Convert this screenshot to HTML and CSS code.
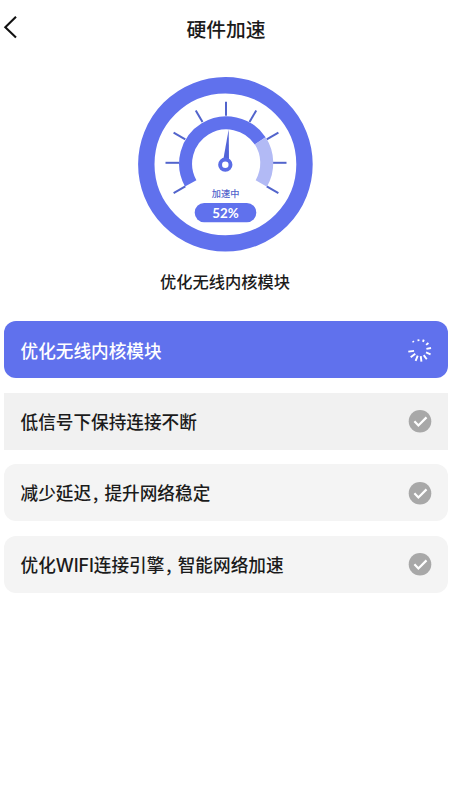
FILE: index.html
```html
<!DOCTYPE html>
<html lang="zh-CN">
<head>
<meta charset="utf-8">
<meta name="viewport" content="width=device-width, initial-scale=1">
<title>硬件加速</title>
<link rel="stylesheet" href="styles.css">
</head>
<body>
<svg class="defs" width="0" height="0" aria-hidden="true">
  <symbol id="check" viewBox="0 0 24 24">
    <circle cx="12" cy="12.3" r="11.3" fill="#a8a8a8"/>
    <path d="M6.4 12.3l4 4.2 8.1-8.1" fill="none" stroke="#fff" stroke-width="2.2"/>
  </symbol>
</svg>
<header class="header">
  <svg class="back" width="20" height="28" viewBox="0 0 20 28"><path d="M16 2.8L5.3 13.2l10.7 10.3" fill="none" stroke="#111" stroke-width="2.1"/></svg>
  <h1 class="title">硬件加速</h1>
</header>
<main>
  <section class="status">
    <svg class="gauge" width="180" height="180" viewBox="135 74 180 180">
      <circle cx="225.4" cy="164.3" r="79.1" fill="none" stroke="#6071ed" stroke-width="16.4"/>
      <g class="ticks" transform="translate(226 162.8)">
        <path d="M0-47V-61"/>
        <path d="M0-47V-60.5" transform="rotate(30)"/>
        <path d="M0-47V-60.5" transform="rotate(60)"/>
        <path d="M0-47V-60.5" transform="rotate(90)"/>
        <path d="M0-47V-60.5" transform="rotate(120)"/>
        <path d="M0-47V-60.5" transform="rotate(-30)"/>
        <path d="M0-47V-60.5" transform="rotate(-60)"/>
        <path d="M0-47V-60.5" transform="rotate(-90)"/>
        <path d="M0-47V-60.5" transform="rotate(-120)"/>
      </g>
      <g transform="translate(226 163)" fill="none" stroke-width="13">
        <path d="M-35.3 20.4A40.8 40.8 0 0 1 34.2-22.2" stroke="#6071ed"/>
        <path d="M34.2-22.2A40.8 40.8 0 0 1 35.3 20.4" stroke="#b2baf5"/>
      </g>
      <path d="M228.7 129.3L223.2 160h5.8z" fill="#5264d8"/>
      <circle cx="225.3" cy="164.7" r="5.2" fill="#fff" stroke="#5a6ce6" stroke-width="3.9"/>
      <text class="gauge-label" x="225.6" y="197.2" text-anchor="middle">加速中</text>
      <rect x="194.7" y="203" width="61.6" height="19.2" rx="9.4" fill="#6071ed"/>
      <text class="gauge-value" x="225.5" y="217.6" text-anchor="middle" textLength="26.5" lengthAdjust="spacingAndGlyphs">52%</text>
    </svg>
    <p class="caption">优化无线内核模块</p>
  </section>
  <ul class="tasks">
    <li class="task active"><span>优化无线内核模块</span>
      <svg class="icon" viewBox="-12 -12 24 24" fill="none" stroke="#fff" stroke-width="1.9">
        <path d="M0-9V-10.8" transform="rotate(-9)"/>
        <path d="M0-8.7V-11" transform="rotate(20)"/>
        <path d="M0-8V-11" transform="rotate(50)"/>
        <path d="M0-6.5V-11.2" transform="rotate(80)"/>
        <path d="M0-6.5V-11.4" transform="rotate(112)"/>
        <path d="M0-6.3V-11.5" transform="rotate(144)"/>
        <path d="M0-6.2V-11.6" transform="rotate(173)"/>
        <path d="M0-6.1V-11.7" transform="rotate(202)"/>
        <path d="M0-6V-11.8" transform="rotate(232)"/>
        <path d="M0-6V-11.8" transform="rotate(262)"/>
        <path d="M0-10V-11.5" transform="rotate(-39)"/>
      </svg></li>
    <li class="task pressed"><span>低信号下保持连接不断</span><svg class="icon"><use href="#check"/></svg></li>
    <li class="task"><span>减少延迟<span class="comma">,</span>提升网络稳定</span><svg class="icon"><use href="#check"/></svg></li>
    <li class="task"><span>优化<span class="latin">WIFI</span>连接引擎<span class="comma">,</span>智能网络加速</span><svg class="icon"><use href="#check"/></svg></li>
  </ul>
</main>
</body>
</html>
```
FILE: styles.css
```css
* { box-sizing: border-box; }
body {
  margin: 0;
  min-height: 800px;
  background: #fff;
  color: #1b1b1b;
  font-family: "Noto Sans CJK SC", sans-serif;
}
h1, p, ul { margin: 0; padding: 0; }
.defs { display: block; }
.header {
  display: grid;
  grid-template-columns: 20px 1fr 18px;
  align-items: center;
  height: 56px;
}
.back { display: block; }
.title {
  padding-top: 2px;
  text-align: center;
  font-size: 19.8px;
  line-height: 30px;
  font-weight: 500;
}
.status {
  display: flex;
  flex-direction: column;
  align-items: center;
  padding-top: 18px;
}
.gauge { display: block; }
.ticks { stroke: #5264cc; stroke-width: 2; }
.gauge-label { font-size: 9.2px; font-weight: 500; fill: #5264cc; }
.gauge-value { font-family: Lato, sans-serif; font-size: 12.8px; font-weight: 700; fill: #fff; }
.caption {
  margin-top: 15px;
  font-size: 16.25px;
  line-height: 24px;
  font-weight: 500;
}
.tasks {
  list-style: none;
  display: flex;
  flex-direction: column;
  gap: 14.4px;
  padding: 28px 2.5px 0 4px;
}
.task {
  display: flex;
  align-items: center;
  justify-content: space-between;
  height: 57.2px;
  padding: 0 15.5px 0 16.5px;
  border-radius: 12px;
  background: #f4f4f4;
  font-size: 17.65px;
  font-weight: 500;
  white-space: nowrap;
}
.active { background: #6071ed; color: #fff; }
.active > span { padding-top: 1px; }
.pressed { background: #f1f1f1; border-radius: 0; }
.icon { flex: none; width: 24px; height: 24px; }
.comma { display: inline-block; width: 13.4px; padding-left: 2px; }
.latin { display: inline-block; width: 38px; font-family: Inter, sans-serif; font-size: 18px; letter-spacing: -0.1px; }
```
